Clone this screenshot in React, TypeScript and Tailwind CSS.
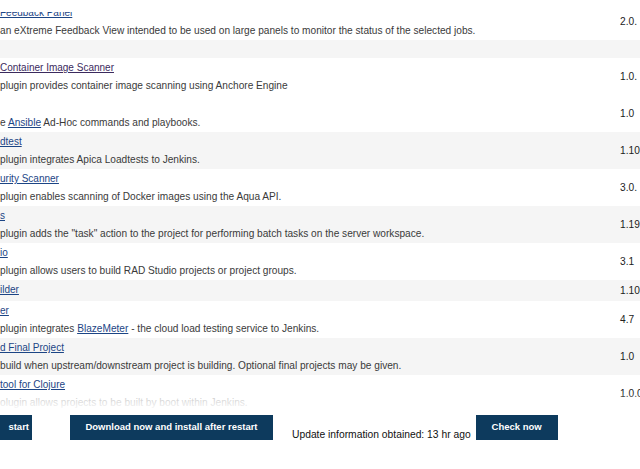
import React from "react";

type Row = {
  title?: React.ReactNode;
  desc?: React.ReactNode;
  version?: string;
  gray?: boolean;
  h: string;
  faded?: boolean;
};

const L = ({ children, visited }: { children: React.ReactNode; visited?: boolean }) => (
  <a className={visited ? "text-[#3b2a5e] underline" : "text-[#1c4585] underline"}>{children}</a>
);

const rows: Row[] = [
  { title: <L>Feedback Panel</L>, desc: "an eXtreme Feedback View intended to be used on large panels to monitor the status of the selected jobs.", version: "2.0.", h: "h-[37px]" },
  { gray: true, h: "h-[18px]" },
  { title: <L visited>Container Image Scanner</L>, desc: "plugin provides container image scanning using Anchore Engine", version: "1.0.", h: "h-[37px]" },
  { title: <span>&nbsp;</span>, desc: <>e <L>Ansible</L> Ad-Hoc commands and playbooks.</>, version: "1.0", h: "h-[37px]" },
  { title: <L>dtest</L>, desc: "plugin integrates Apica Loadtests to Jenkins.", version: "1.10", gray: true, h: "h-[37px]" },
  { title: <L>urity Scanner</L>, desc: "plugin enables scanning of Docker images using the Aqua API.", version: "3.0.", h: "h-[37px]" },
  { title: <L>s</L>, desc: "plugin adds the \"task\" action to the project for performing batch tasks on the server workspace.", version: "1.19", gray: true, h: "h-[37px]" },
  { title: <L>io</L>, desc: "plugin allows users to build RAD Studio projects or project groups.", version: "3.1", h: "h-[37px]" },
  { title: <L>ilder</L>, version: "1.10", gray: true, h: "h-[21px]" },
  { title: <L>er</L>, desc: <>plugin integrates <L>BlazeMeter</L> - the cloud load testing service to Jenkins.</>, version: "4.7", h: "h-[37px]" },
  { title: <L>d Final Project</L>, desc: "build when upstream/downstream project is building. Optional final projects may be given.", version: "1.0", gray: true, h: "h-[37px]" },
  { title: <L>tool for Clojure</L>, desc: "olugin allows projects to be built by boot within Jenkins.", version: "1.0.0", h: "h-[37px]", faded: true },
];

export default function App() {
  return (
    <div
      className="relative w-[640px] h-[469px] overflow-hidden bg-white flex flex-col"
      style={{ fontFamily: '"Liberation Sans", Arial, sans-serif' }}
    >
      <div className="flex-1 overflow-hidden pt-[3px]">
        {rows.map((r, i) => (
          <div key={i} className={`flex ${r.h} ${r.gray ? "bg-[#f5f5f5]" : "bg-white"}`}>
            <div className="flex-1 overflow-hidden pt-[2px] leading-[15px]">
              {r.title && <div className="whitespace-nowrap text-[10px]">{r.title}</div>}
              {r.desc && (
                <div className={`mt-[3px] whitespace-nowrap text-[10.15px] ${r.faded ? "text-[#bdbdbd]" : "text-[#3a3a3a]"}`}>{r.desc}</div>
              )}
            </div>
            <div className="w-[20px] flex items-center whitespace-nowrap text-[10.2px] text-[#222] overflow-visible">
              {r.version}
            </div>
          </div>
        ))}
      </div>
      <div className="relative h-[58px] bg-white shrink-0">
        <div className="absolute -top-[18px] left-0 right-0 h-[18px] bg-gradient-to-b from-white/0 to-white" />
        <div className="flex items-end pt-[4px]">
          <button className="h-[25px] w-[32px] bg-[#0d3a5d] text-white text-[9.5px] font-bold flex items-center justify-end pr-[3px] overflow-hidden whitespace-nowrap">
            start
          </button>
          <button className="ml-[38px] h-[25px] w-[203px] bg-[#0d3a5d] text-white text-[9.5px] font-bold flex items-center justify-center whitespace-nowrap">
            Download now and install after restart
          </button>
          <span className="ml-[19px] text-[10.3px] leading-[12px] text-[#111] whitespace-nowrap mb-[-1px]">
            Update information obtained: 13 hr ago
          </span>
          <button className="ml-[5px] h-[25px] w-[82px] bg-[#0d3a5d] text-white text-[9.5px] font-bold flex items-center justify-center whitespace-nowrap">
            Check now
          </button>
        </div>
      </div>
      <div className="absolute top-0 left-0 right-0 h-[12px] bg-white" />
    </div>
  );
}
